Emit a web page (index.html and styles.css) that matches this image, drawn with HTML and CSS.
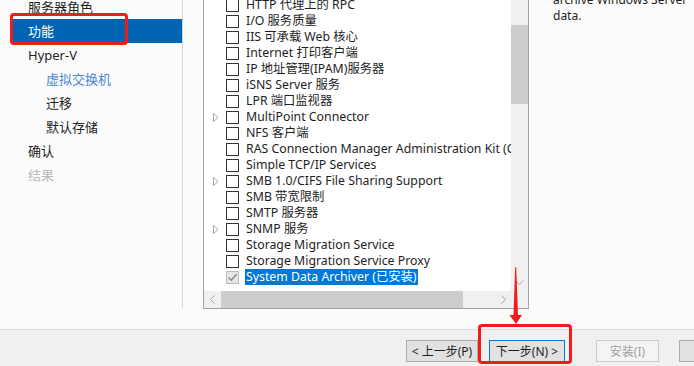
FILE: index.html
```html
<!DOCTYPE html>
<html lang="zh-CN">
<head>
  <meta charset="UTF-8">
  <title>添加角色和功能向导</title>
  <link rel="stylesheet" href="styles.css">
</head>
<body>
  <div class="wizard">
    <div class="main">
      <ul class="nav">
        <li class="nav-item">服务器角色</li>
        <li class="nav-item active">功能</li>
        <li class="nav-item">Hyper-V</li>
        <li class="nav-item sub current">虚拟交换机</li>
        <li class="nav-item sub">迁移</li>
        <li class="nav-item sub">默认存储</li>
        <li class="nav-item">确认</li>
        <li class="nav-item disabled">结果</li>
      </ul>

      <div class="content">
        <div class="listbox">
          <ul class="features">
            <li class="feature"><span class="expander"></span><span class="check"></span><span class="label">HTTP 代理上的 RPC</span></li>
            <li class="feature"><span class="expander"></span><span class="check"></span><span class="label">I/O 服务质量</span></li>
            <li class="feature"><span class="expander"></span><span class="check"></span><span class="label">IIS 可承载 Web 核心</span></li>
            <li class="feature"><span class="expander"></span><span class="check"></span><span class="label">Internet 打印客户端</span></li>
            <li class="feature"><span class="expander"></span><span class="check"></span><span class="label">IP 地址管理(IPAM)服务器</span></li>
            <li class="feature"><span class="expander"></span><span class="check"></span><span class="label">iSNS Server 服务</span></li>
            <li class="feature"><span class="expander"></span><span class="check"></span><span class="label">LPR 端口监视器</span></li>
            <li class="feature"><span class="expander"><svg width="6" height="9" viewBox="0 0 6 9"><path d="M0.5 0.5 L5 4.5 L0.5 8.5 Z" fill="none" stroke="#a6a6a6" stroke-width="1"/></svg></span><span class="check"></span><span class="label">MultiPoint Connector</span></li>
            <li class="feature"><span class="expander"></span><span class="check"></span><span class="label">NFS 客户端</span></li>
            <li class="feature"><span class="expander"></span><span class="check"></span><span class="label">RAS Connection Manager Administration Kit (CMAK)</span></li>
            <li class="feature"><span class="expander"></span><span class="check"></span><span class="label">Simple TCP/IP Services</span></li>
            <li class="feature"><span class="expander"><svg width="6" height="9" viewBox="0 0 6 9"><path d="M0.5 0.5 L5 4.5 L0.5 8.5 Z" fill="none" stroke="#a6a6a6" stroke-width="1"/></svg></span><span class="check"></span><span class="label">SMB 1.0/CIFS File Sharing Support</span></li>
            <li class="feature"><span class="expander"></span><span class="check"></span><span class="label">SMB 带宽限制</span></li>
            <li class="feature"><span class="expander"></span><span class="check"></span><span class="label">SMTP 服务器</span></li>
            <li class="feature"><span class="expander"><svg width="6" height="9" viewBox="0 0 6 9"><path d="M0.5 0.5 L5 4.5 L0.5 8.5 Z" fill="none" stroke="#a6a6a6" stroke-width="1"/></svg></span><span class="check"></span><span class="label">SNMP 服务</span></li>
            <li class="feature"><span class="expander"></span><span class="check"></span><span class="label">Storage Migration Service</span></li>
            <li class="feature"><span class="expander"></span><span class="check"></span><span class="label">Storage Migration Service Proxy</span></li>
            <li class="feature selected"><span class="expander"></span><span class="check checked">
              <svg width="11" height="11" viewBox="0 0 11 11"><path d="M1.5 5.5 L4.2 8.2 L9.5 2.2" fill="none" stroke="#8a8a8a" stroke-width="1.4"/></svg>
            </span><span class="label">System Data Archiver (已安装)</span></li>
          </ul>

          <div class="vscroll">
            <div class="vtrack"><div class="vthumb"></div></div>
            <div class="sbtn">
              <svg width="9" height="6" viewBox="0 0 9 6"><path d="M0.5 0.5 L4.5 4.5 L8.5 0.5" fill="none" stroke="#a6a6a6" stroke-width="1"/></svg>
            </div>
          </div>

          <div class="hscroll">
            <div class="sbtn">
              <svg width="6" height="9" viewBox="0 0 6 9"><path d="M4.5 0.5 L0.5 4.5 L4.5 8.5" fill="none" stroke="#a6a6a6" stroke-width="1"/></svg>
            </div>
            <div class="htrack"><div class="hthumb"></div></div>
            <div class="sbtn">
              <svg width="6" height="9" viewBox="0 0 6 9"><path d="M1.5 0.5 L5.5 4.5 L1.5 8.5" fill="none" stroke="#a6a6a6" stroke-width="1"/></svg>
            </div>
          </div>

          <div class="corner"></div>
        </div>
      </div>

      <div class="description">
        <p class="desc-line">System Data Archiver provides the ability to</p>
        <p class="desc-line">archive Windows Server</p>
        <p class="desc-line">data.</p>
      </div>
    </div>

    <div class="footer">
      <button class="btn">&lt; 上一步(P)</button>
      <button class="btn default">下一步(N) &gt;</button>
      <button class="btn install" disabled>安装(I)</button>
      <button class="btn cancel">取消</button>
    </div>
  </div>

  <!-- annotation overlays -->
  <div class="mark mark-nav"></div>
  <div class="mark mark-next"></div>
  <svg class="arrow" width="20" height="60" viewBox="0 0 20 60">
    <path d="M9.2 0 L10.2 0 L12 48 L16 48 L10 57 L3.5 48 L7.5 48 Z" fill="#ee1c1c"/>
  </svg>
</body>
</html>
```

FILE: styles.css
```css
body {
  margin: 0;
  width: 694px;
  height: 366px;
  overflow: hidden;
  position: relative;
  background: #fbfbfb;
  color: #1e1e1e;
  font-family: "Noto Sans", "Noto Sans CJK SC", sans-serif;
  font-size: 12px;
}

.wizard {
  display: flex;
  flex-direction: column;
  height: 366px;
}

.main {
  display: flex;
  height: 329px;
  overflow: hidden;
}

/* left navigation */
.nav {
  list-style: none;
  margin: 0;
  padding: 0 0 0 12px;
  width: 170px;
  height: 308px;
  border-right: 1px solid #d4d4d4;
  overflow: hidden;
  font-size: 13px;
  flex: none;
}

.nav-item {
  height: 24px;
  line-height: 24px;
  padding-left: 16px;
  white-space: nowrap;
}

.nav-item:first-child {
  margin-top: -5px;
}

.nav-item.sub {
  padding-left: 34px;
}

.nav-item.active {
  background: #0066b4;
  color: #fff;
}

.nav-item.current {
  color: #4a86cf;
}

.nav-item.disabled {
  color: #b9b9b9;
}

/* feature list */
.content {
  padding-left: 20px;
  flex: none;
}

.listbox {
  box-sizing: border-box;
  width: 326px;
  height: 317px;
  margin-top: -8px;
  border: 1px solid #a3a3a3;
  background: #fff;
  display: grid;
  grid-template-columns: 1fr 17px;
  grid-template-rows: 1fr 17px;
}

.features {
  list-style: none;
  margin: 0;
  padding: 4px 0 0;
  overflow: hidden;
  font-size: 12.3px;
}

.feature {
  display: flex;
  align-items: center;
  height: 16px;
  padding-left: 9px;
  white-space: nowrap;
}

.expander {
  width: 13px;
  height: 9px;
  flex: none;
  display: flex;
}

.check {
  box-sizing: border-box;
  width: 13px;
  height: 13px;
  border: 1px solid #333;
  background: #fff;
  flex: none;
  margin-right: 7px;
  display: flex;
  align-items: center;
  justify-content: center;
}

.check.checked {
  border-color: #bcbcbc;
  background: #e6e6e6;
}

.label {
  padding: 0 1px;
  line-height: 16px;
  margin-left: -1px;
}

.feature.selected .label {
  background: #0078d7;
  color: #fff;
}

/* scrollbars */
.vscroll {
  display: flex;
  flex-direction: column;
  background: #f0f0f0;
}

.vtrack {
  flex: 1;
}

.vthumb {
  margin-top: 32px;
  height: 79px;
  background: #cdcdcd;
}

.sbtn {
  width: 17px;
  height: 17px;
  flex: none;
  display: flex;
  align-items: center;
  justify-content: center;
}

.hscroll {
  display: flex;
  background: #f0f0f0;
}

.htrack {
  flex: 1;
}

.hthumb {
  width: 242px;
  height: 17px;
  background: #cdcdcd;
}

.corner {
  background: #f0f0f0;
}

/* description pane */
.description {
  flex: 1;
  padding-left: 24px;
  overflow: hidden;
}

.desc-line {
  margin: 0;
  line-height: 16px;
  white-space: nowrap;
}

.desc-line:first-child {
  margin-top: -24px;
}

/* footer buttons */
.footer {
  flex: 1;
  border-top: 1px solid #dcdcdc;
  background: #f0f0f0;
  display: flex;
  align-items: flex-start;
  padding: 10px 0 0 406px;
  overflow: hidden;
}

.btn {
  flex: none;
  box-sizing: border-box;
  height: 22px;
  width: 72px;
  padding: 0;
  border: 1px solid #adadad;
  background: #e1e1e1;
  color: #1e1e1e;
  font-family: "Noto Sans", "Noto Sans CJK SC", sans-serif;
  font-size: 12px;
  white-space: nowrap;
}

.btn.default {
  margin-left: 11px;
  width: 76px;
  border-color: #0078d7;
}

.btn.install {
  margin-left: 31px;
  width: 63px;
  background: #f4f4f4;
  border-color: #cccccc;
  color: #a0a0a0;
}

.btn.cancel {
  margin-left: 20px;
  width: 72px;
}

/* red annotations */
.mark {
  position: absolute;
  box-sizing: border-box;
  border: 3px solid #ee1c1c;
  border-radius: 4px;
}

.mark-nav {
  left: 10px;
  top: 13px;
  width: 118px;
  height: 32px;
}

.mark-next {
  left: 478px;
  top: 324px;
  width: 94px;
  height: 40px;
}

.arrow {
  position: absolute;
  left: 506px;
  top: 267px;
}
```
